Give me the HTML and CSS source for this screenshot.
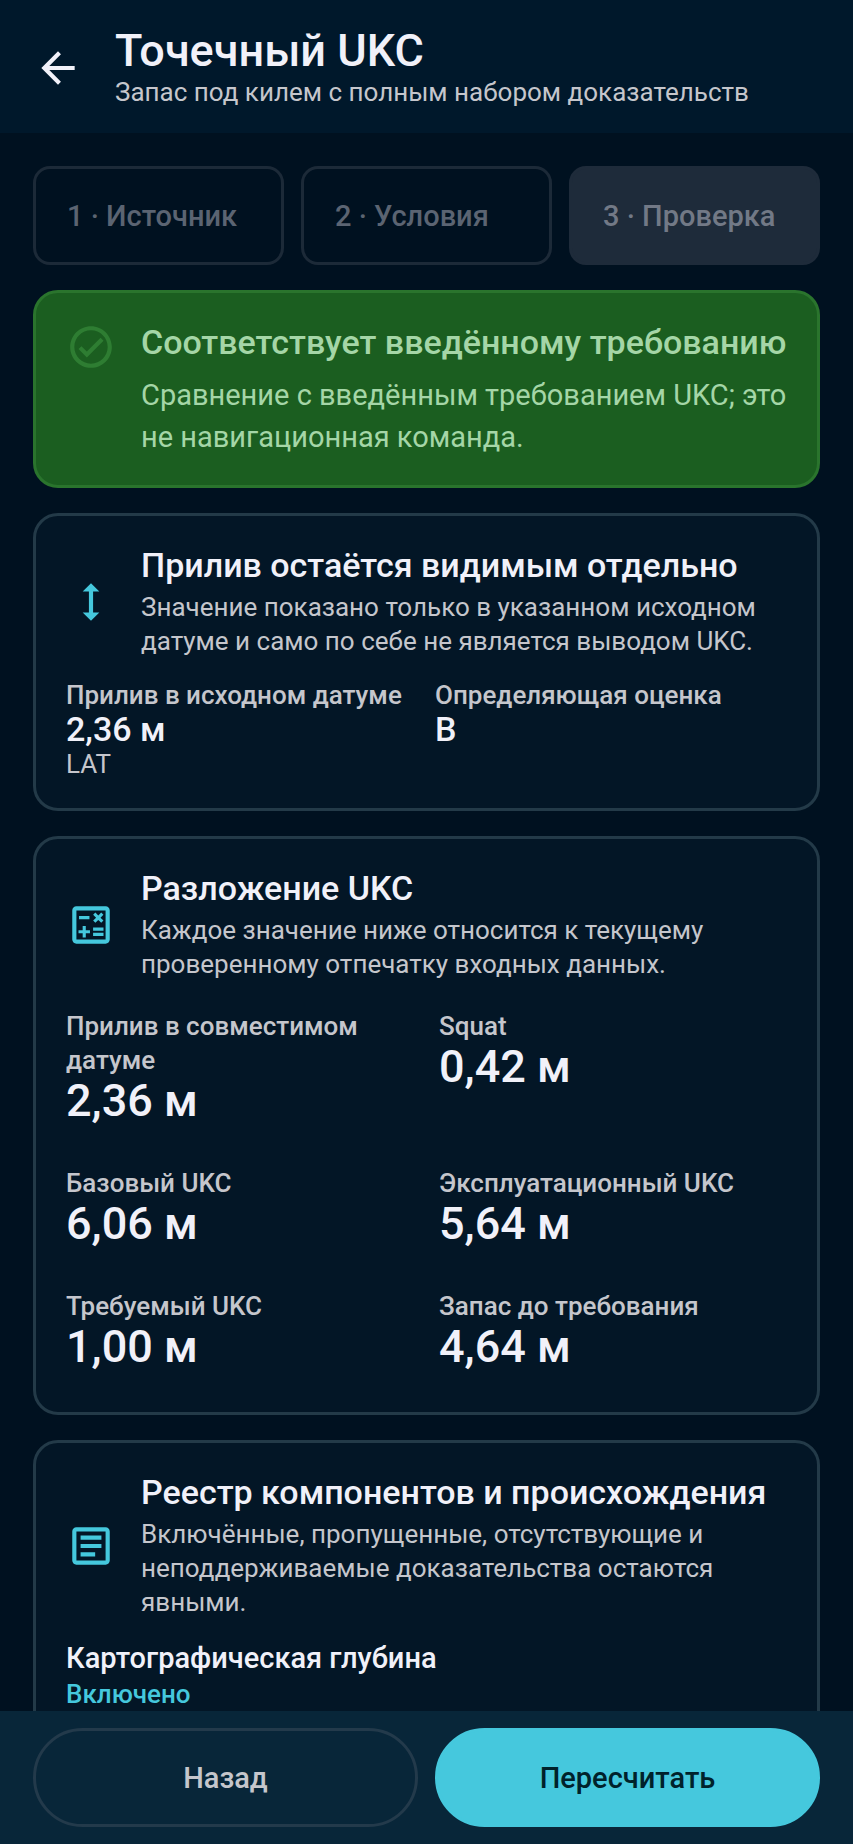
FILE: index.html
```html
<!DOCTYPE html>
<html lang="ru">
<head>
    <meta charset="UTF-8">
    <meta name="viewport" content="width=device-width, initial-scale=1.0">
    <title>Точечный UKC</title>
    <link rel="stylesheet" href="styles.css">
</head>
<body>

    <header class="topbar">
        <button type="button" class="back" aria-label="Назад">
            <svg class="icon" viewBox="0 0 24 24"><path d="M20 11H7.83l5.59-5.59L12 4l-8 8 8 8 1.41-1.41L7.83 13H20z"/></svg>
        </button>
        <div>
            <h1>Точечный UKC</h1>
            <p class="small">Запас под килем с полным набором доказательств</p>
        </div>
    </header>

    <main class="content">
        <nav class="steps">
            <button type="button" class="step" disabled>1 · Источник</button>
            <button type="button" class="step" disabled>2 · Условия</button>
            <button type="button" class="step current" disabled>3 · Проверка</button>
        </nav>

        <section class="card status">
            <svg class="icon" viewBox="0 0 24 24"><path d="M12 2C6.48 2 2 6.48 2 12s4.48 10 10 10 10-4.48 10-10S17.52 2 12 2zm0 18c-4.41 0-8-3.59-8-8s3.59-8 8-8 8 3.59 8 8-3.59 8-8 8zm4.59-12.42L10 14.17l-2.59-2.58L6 13l4 4 8-8z"/></svg>
            <div>
                <h2>Соответствует введённому требованию</h2>
                <p>Сравнение с введённым требованием UKC; это не навигационная команда.</p>
            </div>
        </section>

        <section class="card">
            <div class="card-head">
                <svg class="icon" viewBox="0 0 24 24"><path d="M13 6.99h3L12 3 8 6.99h3v10.02H8L12 21l4-3.99h-3z"/></svg>
                <div>
                    <h2>Прилив остаётся видимым отдельно</h2>
                    <p class="small">Значение показано только в указанном исходном датуме и само по себе не является выводом UKC.</p>
                </div>
            </div>
            <dl class="facts">
                <div>
                    <dt>Прилив в исходном датуме</dt>
                    <dd>2,36 м</dd>
                    <dd class="small">LAT</dd>
                </div>
                <div>
                    <dt>Определяющая оценка</dt>
                    <dd>B</dd>
                </div>
            </dl>
        </section>

        <section class="card">
            <div class="card-head">
                <svg class="icon" viewBox="0 0 24 24"><path d="M19 3H5c-1.1 0-2 .9-2 2v14c0 1.1.9 2 2 2h14c1.1 0 2-.9 2-2V5c0-1.1-.9-2-2-2zm0 16H5V5h14v14z"/><path d="M6.25 7.72h5v1.5h-5zM13 15.75h5v1.5h-5zM13 13.25h5v1.5h-5zM8 18h1.5v-2h2v-1.5h-2v-2H8v2H6V16h2zM14.09 10.95l1.41-1.41 1.41 1.41 1.06-1.06-1.41-1.42 1.41-1.41L16.91 6 15.5 7.41 14.09 6l-1.06 1.06 1.41 1.41-1.41 1.42z"/></svg>
                <div>
                    <h2>Разложение UKC</h2>
                    <p class="small">Каждое значение ниже относится к текущему проверенному отпечатку входных данных.</p>
                </div>
            </div>
            <dl class="metrics">
                <div>
                    <dt>Прилив в совместимом датуме</dt>
                    <dd>2,36 м</dd>
                </div>
                <div>
                    <dt>Squat</dt>
                    <dd>0,42 м</dd>
                </div>
                <div>
                    <dt>Базовый UKC</dt>
                    <dd>6,06 м</dd>
                </div>
                <div>
                    <dt>Эксплуатационный UKC</dt>
                    <dd>5,64 м</dd>
                </div>
                <div>
                    <dt>Требуемый UKC</dt>
                    <dd>1,00 м</dd>
                </div>
                <div>
                    <dt>Запас до требования</dt>
                    <dd>4,64 м</dd>
                </div>
            </dl>
        </section>

        <section class="card">
            <div class="card-head">
                <svg class="icon" viewBox="0 0 24 24"><path d="M19 5v14H5V5h14m0-2H5c-1.1 0-2 .9-2 2v14c0 1.1.9 2 2 2h14c1.1 0 2-.9 2-2V5c0-1.1-.9-2-2-2z"/><path d="M14 17H7v-2h7v2zm3-4H7v-2h10v2zm0-4H7V7h10v2z"/></svg>
                <div>
                    <h2>Реестр компонентов и происхождения</h2>
                    <p class="small">Включённые, пропущенные, отсутствующие и неподдерживаемые доказательства остаются явными.</p>
                </div>
            </div>
            <h3>Картографическая глубина</h3>
            <p class="state">Включено</p>
        </section>
    </main>

    <footer class="actions">
        <button type="button" class="btn">Назад</button>
        <button type="button" class="btn primary">Пересчитать</button>
    </footer>

</body>
</html>
```
FILE: styles.css
```css
* {
    box-sizing: border-box;
    margin: 0;
}

body {
    display: flex;
    flex-direction: column;
    height: 100vh;
    background-color: #001120;
    color: #f1f1f9;
    font-family: Roboto, sans-serif;
    font-size: 29px;
    line-height: 42px;
}

h1, h2, h3, button, dt, dd {
    font-weight: 500;
}

h1 {
    font-size: 45px;
    line-height: 48px;
}

h2 {
    font-size: 34px;
    line-height: 40px;
}

h3 {
    font-size: 29px;
    line-height: 38px;
}

button {
    font-family: inherit;
    font-size: 29px;
    cursor: pointer;
}

.icon {
    display: block;
    flex: none;
    width: 50px;
    height: 50px;
    fill: currentColor;
}

.small {
    color: #c5c6cc;
    font-size: 26px;
    font-weight: 400;
    line-height: 34px;
}

/* Top bar */
.topbar {
    display: flex;
    align-items: center;
    gap: 32px;
    padding: 27px 33px 24px;
    background-color: #00182b;
}

.back {
    padding: 0;
    border: none;
    background: none;
    color: inherit;
}

/* Scrolling area */
.content {
    display: flex;
    flex: 1;
    flex-direction: column;
    gap: 25px;
    min-height: 0;
    padding: 33px;
    overflow-y: auto;
    scrollbar-width: none;
}

.steps {
    display: grid;
    grid-template-columns: repeat(3, 1fr);
    flex: none;
    gap: 17px;
}

.step {
    height: 99px;
    padding: 0 31px;
    border: 3px solid #1c2a38;
    border-radius: 17px;
    background: none;
    color: #5b6472;
    text-align: left;
    white-space: nowrap;
    cursor: default;
}

.step.current {
    background-color: #1e2b3a;
    border-color: #1e2b3a;
    color: #727986;
}

/* Cards */
.card {
    flex: none;
    padding: 29px 30px 27px;
    border: 3px solid #233a48;
    border-radius: 25px;
    background-color: #031626;
}

.card-head {
    display: flex;
    align-items: center;
    gap: 25px;
    margin-bottom: 20px;
}

.card-head .icon {
    color: #45c8dd;
}

.card-head .small {
    margin-top: 5px;
}

.status {
    display: flex;
    gap: 25px;
    border-color: #2a742d;
    background-color: #1b5e20;
    color: #a5d6a7;
}

.status .icon {
    color: #2e7d32;
}

.status p {
    margin-top: 12px;
}

dt {
    color: #c5c6cc;
    font-size: 26px;
    line-height: 34px;
}

.facts {
    display: grid;
    grid-template-columns: 1fr 1fr;
    gap: 17px;
}

.facts dd {
    font-size: 34px;
    line-height: 35px;
}

.facts .small {
    font-size: 26px;
    line-height: 34px;
}

.metrics {
    display: grid;
    grid-template-columns: 1fr 1fr;
    gap: 41px 25px;
    padding: 8px 0 14px;
}

.metrics dd {
    font-size: 45px;
    line-height: 48px;
}

.state {
    color: #45c8dd;
    font-size: 26px;
    font-weight: 500;
    line-height: 34px;
}

/* Bottom buttons */
.actions {
    display: grid;
    grid-template-columns: 1fr 1fr;
    gap: 17px;
    padding: 17px 33px;
    background-color: #082639;
}

.btn {
    height: 99px;
    border: 3px solid #233a4b;
    border-radius: 50px;
    background: none;
    color: #c5c6cc;
}

.primary {
    border-color: #45c8dd;
    background-color: #45c8dd;
    color: #00222b;
}
```
